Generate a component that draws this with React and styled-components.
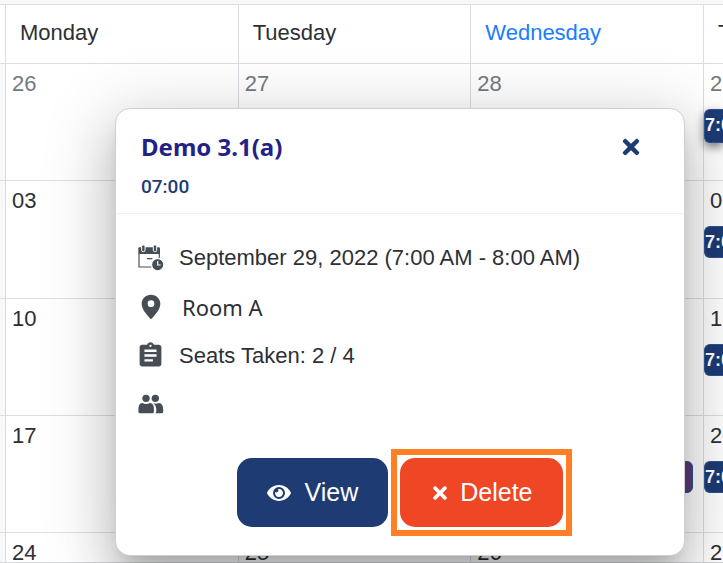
import React from "react";
import styled, { createGlobalStyle } from "styled-components";
import { FaEye, FaTimes } from "react-icons/fa";
import { MdAssignment } from "react-icons/md";

const weekdays = ["", "Monday", "Tuesday", "Wednesday", "Thursday"];

const weeks = [
  { days: ["", "26", "27", "28", "29"], muted: true, lifted: true },
  { days: ["", "03", "04", "05", "06"] },
  { days: ["", "10", "11", "12", "13"] },
  { days: ["", "17", "18", "19", "20"], midweek: true },
  { days: ["", "24", "25", "26", "27"], last: true },
];

const CalendarClock = () => (
  <svg width="26" height="26" viewBox="0 0 78 78" aria-hidden="true">
    <path
      d="M3 26V66H40M64 26V38M27 41H43"
      fill="none"
      stroke="currentColor"
      strokeWidth="3.5"
    />
    <path
      d="M1 10Q1 7 5 7H62Q66 7 66 10V27H1Z"
      fill="currentColor"
    />
    <g fill="currentColor" stroke="#fff" strokeWidth="3">
      <rect x="11" y="0" width="10" height="20" rx="4" />
      <rect x="46" y="0" width="10" height="20" rx="4" />
      <circle cx="59" cy="59" r="18" />
    </g>
    <path d="M59 48V60H68" fill="none" stroke="#fff" strokeWidth="3.5" />
  </svg>
);

const Pin = () => (
  <svg width="20" height="26" viewBox="0 0 60 78" aria-hidden="true">
    <path
      d="M30 2C14 2 2 14 2 29C2 46 16 60 30 76C44 60 58 46 58 29C58 14 46 2 30 2ZM30 39A10 10 0 1 1 30 19A10 10 0 1 1 30 39Z"
      fill="currentColor"
      fillRule="evenodd"
    />
  </svg>
);

const People = () => (
  <svg width="26" height="26" viewBox="0 0 78 78" aria-hidden="true">
    <g fill="currentColor">
      <circle cx="24" cy="19" r="11" />
      <circle cx="52" cy="19" r="11" />
      <path d="M1 56Q0 34 13 33Q25 39 36 33Q49 34 48 56Q48 64 43 64H6Q1 64 1 56Z" />
      <path d="M46 33Q54 38 62 33Q76 34 76 56Q76 64 71 64H52Q56 60 55 52Q54 40 46 33Z" />
    </g>
  </svg>
);

export default function App() {
  return (
    <Page>
      <GlobalStyle />
      <Calendar>
        <colgroup>
          <EdgeCol $width={5} />
          <col />
          <col />
          <col />
          <EdgeCol $width={20} />
        </colgroup>
        <thead>
          <tr>
            {weekdays.map((name, i) => (
              <Weekday key={i} $today={name === "Wednesday"}>
                {name}
              </Weekday>
            ))}
          </tr>
        </thead>
        <tbody>
          {weeks.map((week, row) => (
            <tr key={row}>
              {week.days.map((day, i) => (
                <Day key={i} $muted={week.muted} $last={week.last}>
                  <DayNumber>{day}</DayNumber>
                  {i === 3 && week.midweek && <Event $purple />}
                  {i === 4 && !week.last && (
                    <Event $lifted={week.lifted}>7:00</Event>
                  )}
                </Day>
              ))}
            </tr>
          ))}
        </tbody>
      </Calendar>

      <Overlay>
        <Popup role="dialog" aria-labelledby="event-title">
          <Header>
            <div>
              <Title id="event-title">Demo 3.1(a)</Title>
              <Time>07:00</Time>
            </div>
            <Close aria-label="Close">
              <FaTimes />
            </Close>
          </Header>
          <Details>
            <Detail>
              <IconSlot>
                <CalendarClock />
              </IconSlot>
              September 29, 2022 (7:00 AM - 8:00 AM)
            </Detail>
            <Detail $humanist>
              <IconSlot>
                <Pin />
              </IconSlot>
              Room A
            </Detail>
            <Detail>
              <IconSlot>
                <MdAssignment size={29} />
              </IconSlot>
              Seats Taken: 2 / 4
            </Detail>
            <Detail>
              <IconSlot>
                <People />
              </IconSlot>
            </Detail>
          </Details>
          <Actions>
            <Button>
              <FaEye size={24} />
              View
            </Button>
            <Highlight>
              <Button $danger>
                <FaTimes size={20} />
                Delete
              </Button>
            </Highlight>
          </Actions>
        </Popup>
      </Overlay>
    </Page>
  );
}

const GlobalStyle = createGlobalStyle`
  * {
    box-sizing: border-box;
  }
  body {
    margin: 0;
    background: #fff;
    color: #2c3035;
    font-family: "Liberation Sans", Arial, sans-serif;
    font-size: 22px;
  }
`;

const Page = styled.main`
  position: relative;
  height: 100vh;
  overflow: hidden;
  border-top: 4px solid #f6f8fa;
`;

const Calendar = styled.table`
  width: 100%;
  height: 100%;
  table-layout: fixed;
  border-spacing: 0;
  border-bottom: 1px solid #d5d8dc;
`;

const EdgeCol = styled.col`
  width: ${({ $width }) => $width}px;
`;

const cellLine = "1px solid #dadee3";

const Weekday = styled.th`
  height: 59px;
  padding: 0 0 2px 14px;
  border-top: ${cellLine};
  border-left: ${cellLine};
  color: ${({ $today }) => ($today ? "#1a7dff" : "inherit")};
  font-weight: 400;
  line-height: 24px;
  text-align: left;
  white-space: nowrap;

  &:first-child {
    padding: 0;
    border-left: 0;
  }
`;

const Day = styled.td`
  height: ${({ $last }) => ($last ? "30px" : "auto")};
  padding: 0;
  border-top: ${cellLine};
  border-left: ${cellLine};
  color: ${({ $muted }) => ($muted ? "#747a80" : "inherit")};
  vertical-align: top;
  white-space: nowrap;

  &:first-child {
    border-left: 0;
    background: #f7f9fb;
  }
`;

const DayNumber = styled.div`
  height: 29px;
  padding: 8px 0 0 6px;
  line-height: 24px;
`;

const Event = styled.div`
  height: ${({ $lifted }) => ($lifted ? 34 : 32)}px;
  margin: 16px ${({ $purple }) => ($purple ? 10 : 0)}px
    ${({ $lifted }) => ($lifted ? 0 : 2)}px 0;
  border: 1px solid #2f5591;
  border-right-width: ${({ $purple }) => ($purple ? 1 : 0)}px;
  border-radius: ${({ $purple }) => ($purple ? "6px" : "6px 0 0 6px")};
  background: ${({ $purple }) => ($purple ? "#5b3a7a" : "#1d3b75")};
  box-shadow: ${({ $lifted }) =>
    $lifted ? "0 4px 10px rgba(0, 0, 0, 0.5)" : "none"};
  color: #fff;
  font-size: 18px;
  font-weight: 700;
  line-height: 31px;
`;

const Overlay = styled.div`
  position: absolute;
  inset: 0;
  padding: 104px 38px 0 115px;
`;

const Popup = styled.section`
  border: 1px solid #cfcfcf;
  border-radius: 15px;
  background: #fff;
  box-shadow:
    0 14px 20px -9px rgba(0, 0, 0, 0.2),
    0 30px 50px 4px rgba(0, 0, 0, 0.14),
    0 12px 70px 10px rgba(0, 0, 0, 0.14);
`;

const Header = styled.header`
  display: flex;
  justify-content: space-between;
  align-items: flex-start;
  height: 105px;
  padding: 22px 37px 0 25px;
  border-bottom: 1px solid #f0f0f0;
`;

const Title = styled.h2`
  margin: 0;
  color: #1f2287;
  font-family: "Noto Sans", "Open Sans", sans-serif;
  font-size: 24px;
  font-weight: 700;
  line-height: 32px;
`;

const Time = styled.div`
  margin-top: 12px;
  color: #1d3b75;
  font-family: Roboto, sans-serif;
  font-size: 19px;
  font-weight: 500;
  line-height: 24px;
`;

const Close = styled.button`
  display: flex;
  padding: 4px;
  border: 0;
  background: none;
  color: #1d3b75;
  font-size: 24px;
  cursor: pointer;
`;

const Details = styled.ul`
  margin: 0;
  padding: 19px 20px 0;
  list-style: none;
`;

const Detail = styled.li`
  display: flex;
  align-items: center;
  gap: ${({ $humanist }) => ($humanist ? 17 : 14)}px;
  height: 49px;
  font-family: ${({ $humanist }) =>
    $humanist ? '"Noto Sans", sans-serif' : "inherit"};
  line-height: 24px;
`;

const IconSlot = styled.span`
  display: flex;
  justify-content: center;
  width: 29px;
  color: #464d55;
`;

const Actions = styled.footer`
  display: flex;
  justify-content: center;
  gap: 12px;
  padding: 29px 0 28px;
`;

const Button = styled.button`
  display: flex;
  align-items: center;
  gap: ${({ $danger }) => ($danger ? 10 : 13)}px;
  height: 69px;
  padding: 0 30px;
  border: 0;
  border-radius: 15px;
  background: ${({ $danger }) => ($danger ? "#ef4726" : "#1f3b73")};
  color: #fff;
  font-family: inherit;
  font-size: 25px;
  cursor: pointer;
`;

const Highlight = styled.div`
  outline: 6px solid #ff7f27;
  outline-offset: 3px;
`;
